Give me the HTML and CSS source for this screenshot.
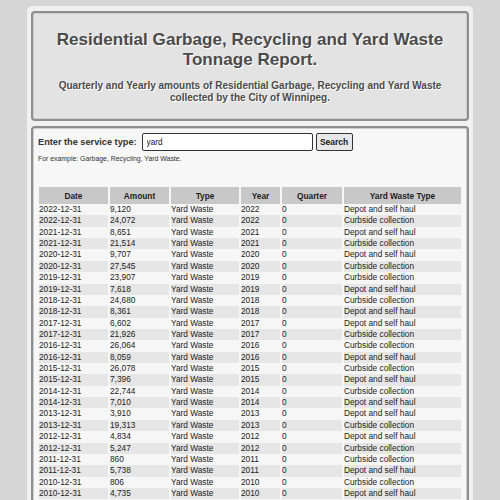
FILE: index.html
```html
<!DOCTYPE html>
<html>
<head>
<meta charset="utf-8">
<link rel="stylesheet" href="styles.css">
</head>
<body>
<div class="wrap">
  <header class="box head">
    <h1>Residential Garbage, Recycling and Yard Waste Tonnage Report.</h1>
    <p class="sub">Quarterly and Yearly amounts of Residential Garbage, Recycling and Yard Waste collected by the City of Winnipeg.</p>
  </header>
  <main class="box body">
    <form class="search">
      <label for="q">Enter the service type:</label>
      <input id="q" type="text" value="yard">
      <button type="button">Search</button>
    </form>
    <p class="hint">For example: Garbage, Recycling, Yard Waste.</p>
    <table>
      <colgroup>
        <col class="c1"><col class="c2"><col class="c3"><col class="c4"><col class="c5"><col class="c6">
      </colgroup>
      <thead>
        <tr><th>Date</th><th>Amount</th><th>Type</th><th>Year</th><th>Quarter</th><th>Yard Waste Type</th></tr>
      </thead>
      <tbody>
        <tr><td>2022-12-31</td><td>9,120</td><td>Yard Waste</td><td>2022</td><td>0</td><td>Depot and self haul</td></tr>
        <tr><td>2022-12-31</td><td>24,072</td><td>Yard Waste</td><td>2022</td><td>0</td><td>Curbside collection</td></tr>
        <tr><td>2021-12-31</td><td>8,651</td><td>Yard Waste</td><td>2021</td><td>0</td><td>Depot and self haul</td></tr>
        <tr><td>2021-12-31</td><td>21,514</td><td>Yard Waste</td><td>2021</td><td>0</td><td>Curbside collection</td></tr>
        <tr><td>2020-12-31</td><td>9,707</td><td>Yard Waste</td><td>2020</td><td>0</td><td>Depot and self haul</td></tr>
        <tr><td>2020-12-31</td><td>27,545</td><td>Yard Waste</td><td>2020</td><td>0</td><td>Curbside collection</td></tr>
        <tr><td>2019-12-31</td><td>23,907</td><td>Yard Waste</td><td>2019</td><td>0</td><td>Curbside collection</td></tr>
        <tr><td>2019-12-31</td><td>7,618</td><td>Yard Waste</td><td>2019</td><td>0</td><td>Depot and self haul</td></tr>
        <tr><td>2018-12-31</td><td>24,680</td><td>Yard Waste</td><td>2018</td><td>0</td><td>Curbside collection</td></tr>
        <tr><td>2018-12-31</td><td>8,361</td><td>Yard Waste</td><td>2018</td><td>0</td><td>Depot and self haul</td></tr>
        <tr><td>2017-12-31</td><td>6,602</td><td>Yard Waste</td><td>2017</td><td>0</td><td>Depot and self haul</td></tr>
        <tr><td>2017-12-31</td><td>21,926</td><td>Yard Waste</td><td>2017</td><td>0</td><td>Curbside collection</td></tr>
        <tr><td>2016-12-31</td><td>26,064</td><td>Yard Waste</td><td>2016</td><td>0</td><td>Curbside collection</td></tr>
        <tr><td>2016-12-31</td><td>8,059</td><td>Yard Waste</td><td>2016</td><td>0</td><td>Depot and self haul</td></tr>
        <tr><td>2015-12-31</td><td>26,078</td><td>Yard Waste</td><td>2015</td><td>0</td><td>Curbside collection</td></tr>
        <tr><td>2015-12-31</td><td>7,396</td><td>Yard Waste</td><td>2015</td><td>0</td><td>Depot and self haul</td></tr>
        <tr><td>2014-12-31</td><td>22,744</td><td>Yard Waste</td><td>2014</td><td>0</td><td>Curbside collection</td></tr>
        <tr><td>2014-12-31</td><td>7,010</td><td>Yard Waste</td><td>2014</td><td>0</td><td>Depot and self haul</td></tr>
        <tr><td>2013-12-31</td><td>3,910</td><td>Yard Waste</td><td>2013</td><td>0</td><td>Depot and self haul</td></tr>
        <tr><td>2013-12-31</td><td>19,313</td><td>Yard Waste</td><td>2013</td><td>0</td><td>Curbside collection</td></tr>
        <tr><td>2012-12-31</td><td>4,834</td><td>Yard Waste</td><td>2012</td><td>0</td><td>Depot and self haul</td></tr>
        <tr><td>2012-12-31</td><td>5,247</td><td>Yard Waste</td><td>2012</td><td>0</td><td>Curbside collection</td></tr>
        <tr><td>2011-12-31</td><td>860</td><td>Yard Waste</td><td>2011</td><td>0</td><td>Curbside collection</td></tr>
        <tr><td>2011-12-31</td><td>5,738</td><td>Yard Waste</td><td>2011</td><td>0</td><td>Depot and self haul</td></tr>
        <tr><td>2010-12-31</td><td>806</td><td>Yard Waste</td><td>2010</td><td>0</td><td>Curbside collection</td></tr>
        <tr><td>2010-12-31</td><td>4,735</td><td>Yard Waste</td><td>2010</td><td>0</td><td>Depot and self haul</td></tr>
      </tbody>
    </table>
  </main>
</div>
</body>
</html>
```

FILE: styles.css
```css
html, body {
  margin: 0;
  padding: 0;
  background: #d6d6d6;
  font-family: "Liberation Sans", Arial, sans-serif;
  color: #222;
}

.wrap {
  width: 438px;
  margin: 6px 0 0 27px;
  padding: 5px 4px 0 4px;
  background: #f1f1f1;
  border-radius: 5px 5px 0 0;
}

.box {
  border: 2px solid #8e8e8e;
  border-radius: 4px;
  box-shadow: inset 0 0 0 1px #cfcfcf;
}

.head {
  background: #e3e3e3;
  box-sizing: border-box;
  height: 110px;
  padding: 17px 20px 0 20px;
  text-align: center;
  color: #4b4b4b;
  text-shadow: 1px 1px 0 #ffffff;
}

.head h1 {
  margin: 0;
  font-size: 17.1px;
  line-height: 20px;
  font-weight: bold;
}

.head .sub {
  margin: 10px 0 0 0;
  font-size: 10px;
  line-height: 12px;
  font-weight: bold;
}

.body {
  margin-top: 5px;
  background: #f7f7f7;
  padding: 5px 4px 10px 4px;
}

.search {
  display: flex;
  align-items: center;
  margin: 0 0 0 1px;
  height: 18px;
}

.search label {
  font-size: 9.2px;
  font-weight: bold;
  color: #333;
  margin-right: 5px;
}

.search input {
  box-sizing: border-box;
  width: 171px;
  height: 18px;
  margin: 0;
  padding: 0 4px;
  border: 1px solid #333;
  border-radius: 2px;
  background: #fff;
  font-family: "Liberation Sans", Arial, sans-serif;
  font-size: 8.2px;
  color: #111;
}

.search button {
  box-sizing: border-box;
  height: 18px;
  width: 37px;
  margin-left: 3px;
  padding: 0;
  border: 1px solid #333;
  border-radius: 2px;
  background: #e8e8e8;
  font-family: "Liberation Sans", Arial, sans-serif;
  font-size: 8.5px;
  font-weight: bold;
  color: #222;
}

.hint {
  margin: 3px 0 0 1px;
  font-size: 6.9px;
  line-height: 9px;
  color: #333;
}

table {
  margin-top: 24px;
  table-layout: fixed;
  border-collapse: separate;
  border-spacing: 2px 0;
  width: 424px;
  font-size: 8.3px;
  color: #222;
}

col.c1 { width: 69px; }
col.c2 { width: 59px; }
col.c3 { width: 68px; }
col.c4 { width: 39px; }
col.c5 { width: 60px; }
col.c6 { width: 117px; }

th {
  background: #c8c8c8;
  height: 17px;
  padding: 0;
  font-weight: bold;
  text-align: center;
  color: #222;
}

td {
  padding: 0;
  line-height: 11.36px;
  height: 11.36px;
  white-space: nowrap;
  overflow: hidden;
}

tbody tr:nth-child(odd) td { background: #f6f6f6; }
tbody tr:nth-child(even) td { background: #e6e6e6; }
```
